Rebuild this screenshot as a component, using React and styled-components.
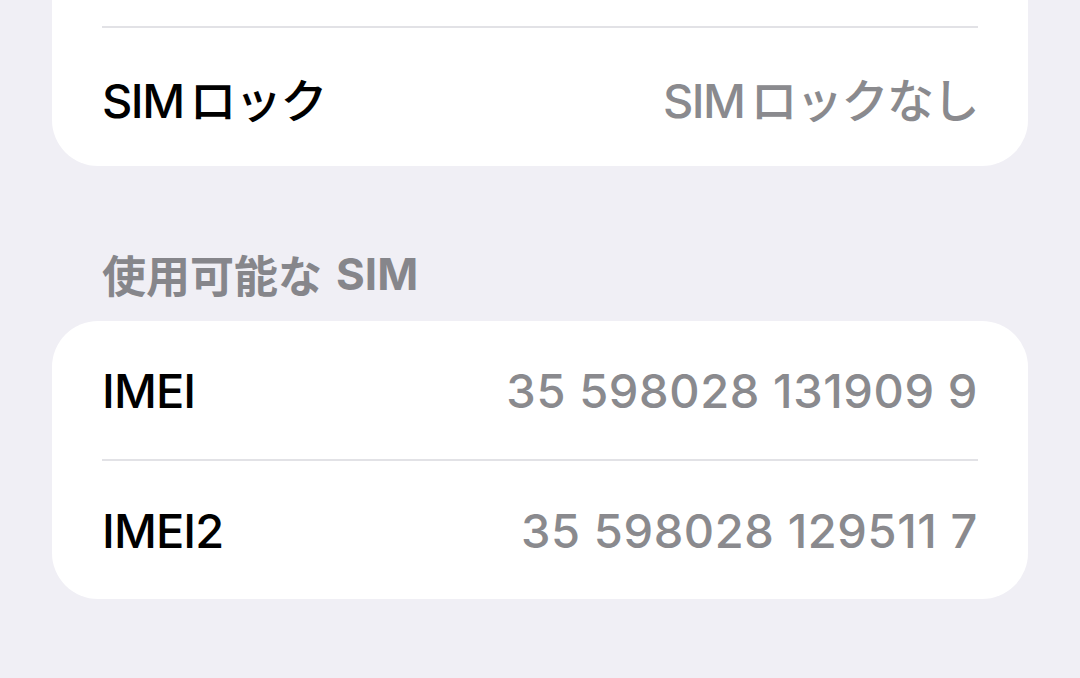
import React from "react";
import styled, { createGlobalStyle } from "styled-components";

const Global = createGlobalStyle`
    html, body {
        margin: 0;
        padding: 0;
        background: #f0eff5;
        overflow: hidden;
    }
    body {
        font-family: "Inter", "Noto Sans CJK JP", sans-serif;
        -webkit-font-smoothing: antialiased;
    }
`;

const Page = styled.div`
    width: 1080px;
    height: 678px;
    overflow: hidden;
    box-sizing: border-box;
    padding: 0 52px;
`;

const Card = styled.div`
    background: #ffffff;
    border-radius: 46px;
    margin-top: ${(p) => p.offset || 0}px;
`;

const Row = styled.div`
    height: ${(p) => p.h || 140}px;
    margin: 0 50px;
    display: flex;
    align-items: center;
    justify-content: space-between;
    border-top: ${(p) => (p.divider ? "2px solid #e2e2e6" : "none")};
    box-sizing: border-box;
`;

const Label = styled.span`
    font-size: 47px;
    font-weight: 500;
    color: #000000;
    letter-spacing: ${(p) => (p.cjk ? "-1.5px" : "-0.9px")};
`;

const Value = styled.span`
    font-size: 47px;
    font-weight: 500;
    color: #8a8a8e;
    letter-spacing: ${(p) => (p.cjk ? "-1.5px" : "0.6px")};
`;

const SectionHeader = styled.div`
    margin: 84px 0 24px 50px;
    height: 47px;
    display: flex;
    align-items: center;
    font-size: 44px;
    font-weight: 700;
    color: #86868b;
`;

const Latin = styled.span`
    margin-left: ${(p) => p.before || 0}px;
    margin-right: ${(p) => p.after || 0}px;
`;

const App = () => {
    return (
        <>
            <Global />
            <Page>
                <Card offset={-114}>
                    <Row h={140} />
                    <Row divider>
                        <Label cjk><Latin after={6}>SIM</Latin>ロック</Label>
                        <Value cjk><Latin after={6}>SIM</Latin>ロックなし</Value>
                    </Row>
                </Card>
                <SectionHeader>使用可能な<Latin before={14}>SIM</Latin></SectionHeader>
                <Card>
                    <Row h={138}>
                        <Label>IMEI</Label>
                        <Value>35 598028 131909 9</Value>
                    </Row>
                    <Row divider>
                        <Label>IMEI2</Label>
                        <Value>35 598028 129511 7</Value>
                    </Row>
                </Card>
            </Page>
        </>
    );
};

export default App;
